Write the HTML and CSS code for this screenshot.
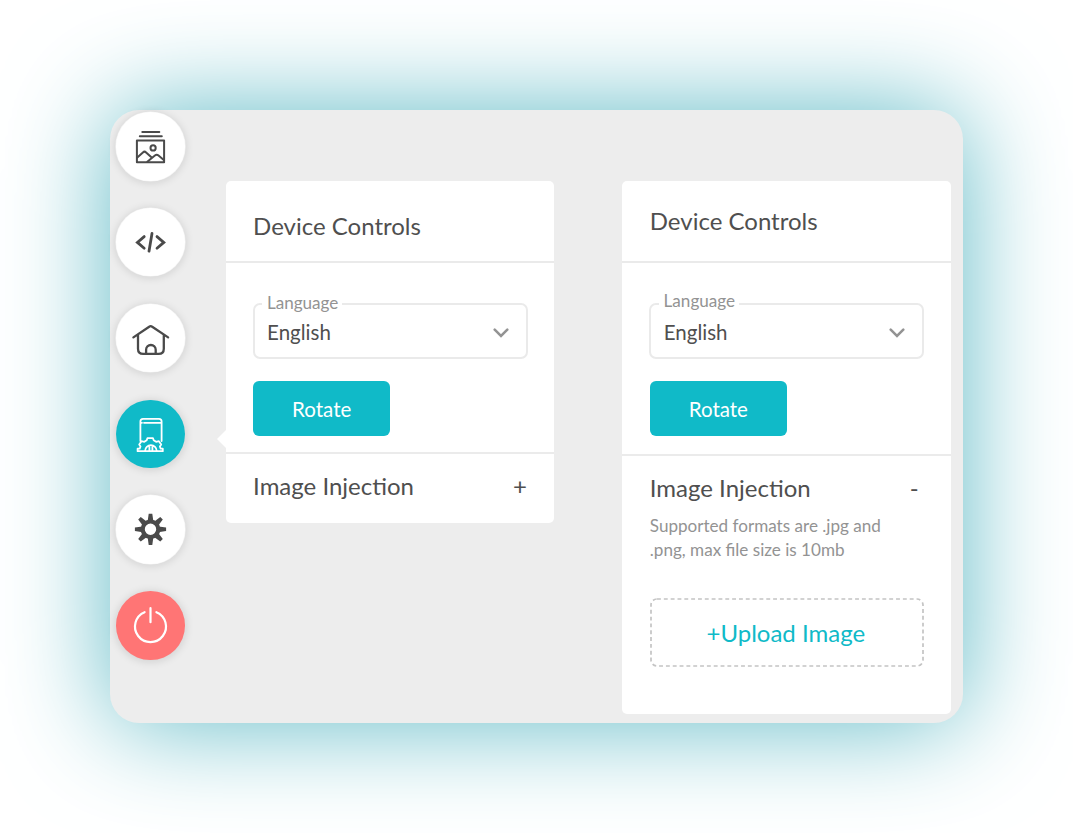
FILE: index.html
```html
<!DOCTYPE html>
<html lang="en">
<head>
<meta charset="utf-8">
<title>Device Controls</title>
<link rel="stylesheet" href="styles.css">
</head>
<body>
<main class="board">
  <nav class="rail">
    <button class="rail-btn" aria-label="Gallery">
      <svg viewBox="0 0 69 69" fill="none" stroke="#4a4a4a" stroke-width="2" stroke-linecap="round" stroke-linejoin="round">
        <path d="M26.3 20h17M23.8 24.2h22M20.9 28.4h27.2v21.8H20.9z"/>
        <circle cx="37.1" cy="35.9" r="2.6"/>
        <path d="M21.3 45.5l5.6-5.1q1.6-1.5 3.2 0l5.3 4.8M31.3 49.8l7.6-6.3q1.8-1.5 3.6 0l5.3 4.4"/>
      </svg>
    </button>
    <button class="rail-btn" aria-label="Code">
      <svg viewBox="0 0 69 69" fill="none" stroke="#4a4a4a" stroke-width="2.8" stroke-linecap="round" stroke-linejoin="miter">
        <path d="M28.2 28.6L21.4 34.4L28.2 40.2M41 28.6L47.8 34.4L41 40.2M36 25.4L33 43.2"/>
      </svg>
    </button>
    <button class="rail-btn" aria-label="Home">
      <svg viewBox="0 0 69 69" fill="none" stroke="#4a4a4a" stroke-width="2.3" stroke-linecap="round" stroke-linejoin="round">
        <path d="M17.4 33.4L33.2 22.7q1.5-1 3 0L52.1 33.4M22 30.9v13.8q0 5.2 5.2 5.2H42.6q5.2 0 5.2-5.2V30.9M30.1 49.6v-3.8a4.8 4.8 0 0 1 9.6 0v3.8"/>
      </svg>
    </button>
    <button class="rail-btn rail-btn-active" aria-label="Device controls">
      <svg viewBox="0 0 69 69" fill="none" stroke="#fff" stroke-width="1.8" stroke-linecap="round" stroke-linejoin="round">
        <path d="M24.4 41V21.5q0-2.6 2.6-2.6h16q2.6 0 2.6 2.6V41M25 22.8h1M28 22.8h17"/>
        <path d="M21.6 51.2v-2.5h2.1l.8-2.2-1.3-1.9 2.3-3.4 2.8.6 2.4-1.6.7-2h5.6l.7 2 2.4 1.6 2.8-.6 2.3 3.4-1.3 1.9.8 2.2h2.1v2.5z"/>
        <path d="M29.1 51a5.8 5.8 0 0 1 11.6 0M33.4 46v5M36.4 46v5"/>
      </svg>
    </button>
    <button class="rail-btn" aria-label="Settings">
      <svg viewBox="0 0 69 69">
        <g fill="#4a4a4a">
          <g id="teeth"><path id="tooth" d="M31.4 28L32.7 18.7h3.6L37.6 28zM31.4 40.6L32.7 49.9h3.6L37.6 40.6z"/>
          <use href="#tooth" transform="rotate(90 34.5 34.3)"/></g>
          <use href="#teeth" transform="rotate(45 34.5 34.3)"/>
        </g>
        <circle cx="34.5" cy="34.3" r="7.8" fill="#fff" stroke="#4a4a4a" stroke-width="4.2"/>
      </svg>
    </button>
    <button class="rail-btn rail-btn-power" aria-label="Power">
      <svg viewBox="0 0 69 69" fill="none" stroke="#fff" stroke-width="2.2" stroke-linecap="round">
        <path d="M28.6 21.2a15.5 15.5 0 1 0 11.8 0M34.5 17.2v14"/>
      </svg>
    </button>
  </nav>

  <section class="panel panel-collapsed">
    <header class="panel-head"><h2 class="title">Device Controls</h2></header>
    <div class="panel-body">
      <div class="select">
        <span class="select-label">Language</span>
        <span class="select-value">English</span>
        <svg class="chevron" viewBox="0 0 16 10"><path d="M1.7 1.7L8 8l6.3-6.3"/></svg>
      </div>
      <button class="rotate">Rotate</button>
    </div>
    <div class="injection">
      <div class="injection-row"><h2 class="title">Image Injection</h2><span class="sign">+</span></div>
    </div>
  </section>

  <section class="panel panel-expanded">
    <header class="panel-head"><h2 class="title">Device Controls</h2></header>
    <div class="panel-body">
      <div class="select">
        <span class="select-label">Language</span>
        <span class="select-value">English</span>
        <svg class="chevron" viewBox="0 0 16 10"><path d="M1.7 1.7L8 8l6.3-6.3"/></svg>
      </div>
      <button class="rotate">Rotate</button>
    </div>
    <div class="injection">
      <div class="injection-row"><h2 class="title">Image Injection</h2><span class="sign">-</span></div>
      <p class="hint">Supported formats are .jpg and<br>.png, max file size is 10mb</p>
      <button class="upload">
        <svg class="upload-frame" viewBox="0 0 274 69"><rect x="1" y="1" width="272" height="67" rx="6"/></svg>
        <span>+Upload Image</span>
      </button>
    </div>
  </section>
</main>
</body>
</html>
```
FILE: styles.css
```css
* { box-sizing: border-box; }

body {
  margin: 0;
  height: 833px;
  padding: 110px;
  overflow: hidden;
  background: #fff;
  color: #4f4f4f;
  font-family: Lato, "Liberation Sans", sans-serif;
}

button {
  border: 0;
  padding: 0;
  font: inherit;
}

.board {
  display: flex;
  align-items: flex-start;
  width: 853px;
  height: 613px;
  padding-left: 6.3px;
  border-radius: 29px;
  background: #ededed;
  box-shadow: 0 0 105px #5db9c5;
}

.rail {
  display: flex;
  flex-direction: column;
  gap: 27.3px;
  padding-top: 2.2px;
  margin-right: 41px;
}

.rail-btn {
  width: 68.5px;
  height: 68.5px;
  border-radius: 50%;
  background: #fff;
  box-shadow: 0 0 0 .6px #f3f3f3, 0 1px 9px 1px rgba(0, 0, 0, .12);
}
.rail-btn svg { display: block; width: 69px; height: 69px; }
.rail-btn-active { background: #10bac8; box-shadow: 0 1px 9px 1px rgba(0, 0, 0, .12); }
.rail-btn-power { background: #ff7575; box-shadow: 0 1px 9px 1px rgba(0, 0, 0, .12); }

.panel {
  position: relative;
  width: 328.5px;
  margin-top: 70.7px;
  border-radius: 5px;
  background: #fff;
}
.panel-collapsed { height: 342px; margin-right: 68.2px; }
.panel-expanded { height: 533.7px; }

/* pointer toward the active rail button */
.panel-collapsed::before {
  content: "";
  position: absolute;
  left: -9px;
  top: 249px;
  border: solid transparent;
  border-width: 9.5px 9px 9.5px 0;
  border-right-color: #fff;
}

.title {
  margin: 0;
  font-size: 24px;
  line-height: 30px;
  font-weight: 400;
}

.panel-head {
  height: 82.3px;
  padding: 30px 27.3px 0;
  border-bottom: 2px solid #eaeaea;
}
.panel-expanded .panel-head { padding-top: 25px; }

.panel-body {
  height: 191px;
  padding: 40px 27px 0;
  border-bottom: 2px solid #ebebeb;
}
.panel-expanded .panel-body { height: 193px; }

.select {
  position: relative;
  display: flex;
  align-items: center;
  justify-content: space-between;
  width: 275px;
  height: 56px;
  margin-left: -.3px;
  padding: 2px 17px 0 12.6px;
  border: 2px solid #eaeaea;
  border-radius: 7px;
}
.select-label {
  position: absolute;
  left: 7.4px;
  top: -12px;
  padding: 0 4px 0 5px;
  background: #fff;
  color: #939393;
  font-size: 17.1px;
  line-height: 20px;
}
.panel-expanded .select-label { top: -13.5px; }
.select-value { font-size: 20.5px; line-height: 26px; }
.chevron { width: 16px; height: 10px; margin-top: 2px; fill: none; stroke: #939393; stroke-width: 2.5; stroke-linecap: round; }

.rotate {
  display: block;
  width: 137px;
  height: 55px;
  margin: 21.8px 0 0 .4px;
  border-radius: 6px;
  background: #10bac8;
  color: #fff;
  font-size: 20.5px;
  padding: 2px 0 0;
}

.injection { padding: 17.3px 27.3px 0; }
.injection-row { display: flex; justify-content: space-between; }
.sign { font-size: 24px; line-height: 30px; }
.panel-expanded .sign { margin-right: 5px; }

.hint {
  margin: 10.5px 0 0;
  color: #939393;
  font-size: 17.1px;
  line-height: 24px;
}

.upload {
  position: relative;
  width: 274px;
  height: 69px;
  margin-top: 36px;
  padding-right: 2px;
  background: none;
  color: #10bac8;
  font-size: 24px;
}
.upload-frame { position: absolute; inset: 0; width: 274px; height: 69px; }
.upload-frame rect { fill: none; stroke: #c4c4c4; stroke-width: 1.7; stroke-dasharray: 3.9 2.93; }
```
